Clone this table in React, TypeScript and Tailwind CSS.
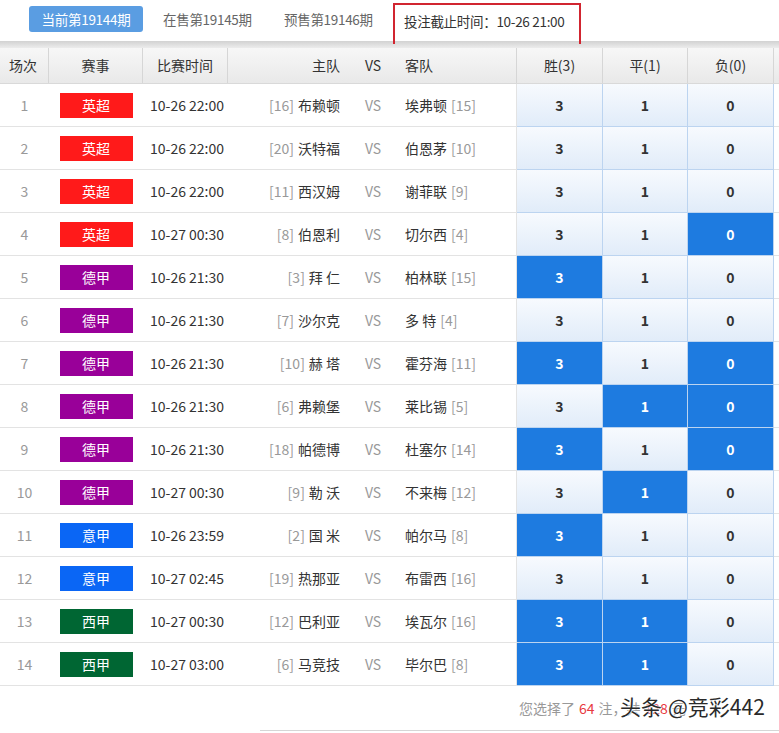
import React from "react";

type Match = {
  no: number;
  league: string;
  time: string;
  home: string;
  homeRank: string;
  away: string;
  awayRank: string;
  picks: [boolean, boolean, boolean];
};

const leagueColor: Record<string, string> = {
  英超: "bg-[#ff1a1a]",
  德甲: "bg-[#990099]",
  意甲: "bg-[#0a66f5]",
  西甲: "bg-[#006633]",
};

const matches: Match[] = [
  { no: 1, league: "英超", time: "10-26 22:00", home: "布赖顿", homeRank: "16", away: "埃弗顿", awayRank: "15", picks: [false, false, false] },
  { no: 2, league: "英超", time: "10-26 22:00", home: "沃特福", homeRank: "20", away: "伯恩茅", awayRank: "10", picks: [false, false, false] },
  { no: 3, league: "英超", time: "10-26 22:00", home: "西汉姆", homeRank: "11", away: "谢菲联", awayRank: "9", picks: [false, false, false] },
  { no: 4, league: "英超", time: "10-27 00:30", home: "伯恩利", homeRank: "8", away: "切尔西", awayRank: "4", picks: [false, false, true] },
  { no: 5, league: "德甲", time: "10-26 21:30", home: "拜 仁", homeRank: "3", away: "柏林联", awayRank: "15", picks: [true, false, false] },
  { no: 6, league: "德甲", time: "10-26 21:30", home: "沙尔克", homeRank: "7", away: "多 特", awayRank: "4", picks: [false, false, false] },
  { no: 7, league: "德甲", time: "10-26 21:30", home: "赫 塔", homeRank: "10", away: "霍芬海", awayRank: "11", picks: [true, false, true] },
  { no: 8, league: "德甲", time: "10-26 21:30", home: "弗赖堡", homeRank: "6", away: "莱比锡", awayRank: "5", picks: [false, true, true] },
  { no: 9, league: "德甲", time: "10-26 21:30", home: "帕德博", homeRank: "18", away: "杜塞尔", awayRank: "14", picks: [true, false, true] },
  { no: 10, league: "德甲", time: "10-27 00:30", home: "勒 沃", homeRank: "9", away: "不来梅", awayRank: "12", picks: [false, true, false] },
  { no: 11, league: "意甲", time: "10-26 23:59", home: "国 米", homeRank: "2", away: "帕尔马", awayRank: "8", picks: [true, false, false] },
  { no: 12, league: "意甲", time: "10-27 02:45", home: "热那亚", homeRank: "19", away: "布雷西", awayRank: "16", picks: [false, false, false] },
  { no: 13, league: "西甲", time: "10-27 00:30", home: "巴利亚", homeRank: "12", away: "埃瓦尔", awayRank: "16", picks: [true, true, false] },
  { no: 14, league: "西甲", time: "10-27 03:00", home: "马竞技", homeRank: "6", away: "毕尔巴", awayRank: "8", picks: [true, true, false] },
];

const cols = "grid grid-cols-[49px_94px_85px_127px_36px_126px_86px_85px_86px_5px]";

function OddsCell({ value, on }: { value: string; on: boolean }) {
  return (
    <div
      className={
        "flex items-center justify-center border-r border-b border-[#bcd4f0] text-[14px] font-bold " +
        (on
          ? "bg-[#1e7be0] text-white"
          : "bg-gradient-to-b from-[#f7fafe] to-[#e1ecf9] text-[#333]")
      }
    >
      {value}
    </div>
  );
}

export default function App() {
  return (
    <div className="w-[779px] bg-white font-['Noto_Sans_CJK_SC','Noto_Sans',sans-serif] text-[14px] text-[#333]">
      {/* 期次切换 */}
      <div className="flex h-[41px] items-start">
        <div className="ml-[29px] mt-[6px] flex h-[26px] w-[114px] items-center justify-center rounded-[3px] bg-[#5a9de2] text-[13.5px] tracking-[-0.3px] text-white">
          当前第19144期
        </div>
        <div className="ml-[20px] mt-[6px] flex h-[26px] w-[88px] items-center whitespace-nowrap text-[13.5px] tracking-[-0.3px] text-[#666]">
          在售第19145期
        </div>
        <div className="ml-[33px] mt-[6px] flex h-[26px] w-[88px] items-center whitespace-nowrap text-[13.5px] tracking-[-0.3px] text-[#666]">
          预售第19146期
        </div>
        <div className="ml-[21px] mt-[3px] flex h-[41px] w-[188px] items-start whitespace-nowrap border-2 border-b-0 border-[#d12530] pl-[9px] pt-[6px] text-[13.5px] tracking-[-0.3px]">
          投注截止时间：10-26 21:00
        </div>
      </div>
      <div className="h-[7px] bg-gradient-to-b from-[#d2d2d2] to-[#ececec]" />

      {/* 表头 */}
      <div className={cols + " h-[36px] border-b border-[#d9d9d9] bg-gradient-to-b from-[#f7f7f7] to-[#e9e9e9] text-[14px]"}>
        <div className="flex items-center justify-center border-r border-[#d6d6d6] pr-[2px]">场次</div>
        <div className="flex items-center justify-center border-r border-[#d6d6d6]">赛事</div>
        <div className="flex items-center justify-center border-r border-[#d6d6d6]">比赛时间</div>
        <div className="flex items-center justify-end pr-[15px]">主队</div>
        <div className="flex items-center justify-center">VS</div>
        <div className="flex items-center border-r border-[#d6d6d6] pl-[14px]">客队</div>
        <div className="flex items-center justify-center border-r border-[#d6d6d6]">胜(3)</div>
        <div className="flex items-center justify-center border-r border-[#d6d6d6]">平(1)</div>
        <div className="flex items-center justify-center border-r border-[#d6d6d6]">负(0)</div>
        <div />
      </div>

      {/* 比赛列表 */}
      {matches.map((m) => (
        <div key={m.no} className={cols + " h-[43px]"}>
          <div className="flex items-center justify-center border-b border-[#e3e3e3] text-[#999]">{m.no}</div>
          <div className="flex items-center justify-center border-b border-[#e3e3e3]">
            <span className={"flex h-[25px] w-[73px] items-center justify-center text-white " + leagueColor[m.league]}>
              {m.league}
            </span>
          </div>
          <div className="flex items-center border-b border-[#e3e3e3] pl-[7px]">{m.time}</div>
          <div className="flex items-center justify-end border-b border-[#e3e3e3] pr-[15px]">
            <span className="mr-[4px] text-[#999]">[{m.homeRank}]</span>
            {m.home}
          </div>
          <div className="flex items-center justify-center border-b border-[#e3e3e3] text-[#999]">VS</div>
          <div className="flex items-center border-b border-r border-[#e3e3e3] pl-[14px]">
            {m.away}
            <span className="ml-[4px] text-[#999]">[{m.awayRank}]</span>
          </div>
          <OddsCell value="3" on={m.picks[0]} />
          <OddsCell value="1" on={m.picks[1]} />
          <OddsCell value="0" on={m.picks[2]} />
          <div className="border-b border-[#e3e3e3]" />
        </div>
      ))}

      {/* 底部统计 */}
      <div className="relative h-[46px]">
        <div className="flex h-[44px] items-center whitespace-nowrap pl-[519px] text-[#999]">
          您选择了<span className="mx-[4px] text-[#e8393f]">64</span>注，共<span className="mx-[4px] text-[#e8393f]">128</span>元
        </div>
        <div className="ml-[260px] border-b border-[#d6d6d6]" />
        <div className="absolute left-[620px] top-[5px] flex gap-[6px] whitespace-nowrap text-[21px] leading-[30px] text-[#2a2a2a] [text-shadow:0_0_2px_#fff,0_0_2px_#fff,0_0_1px_#fff]">
          <span>头条</span>
          <span>@竞彩442</span>
        </div>
      </div>
    </div>
  );
}
